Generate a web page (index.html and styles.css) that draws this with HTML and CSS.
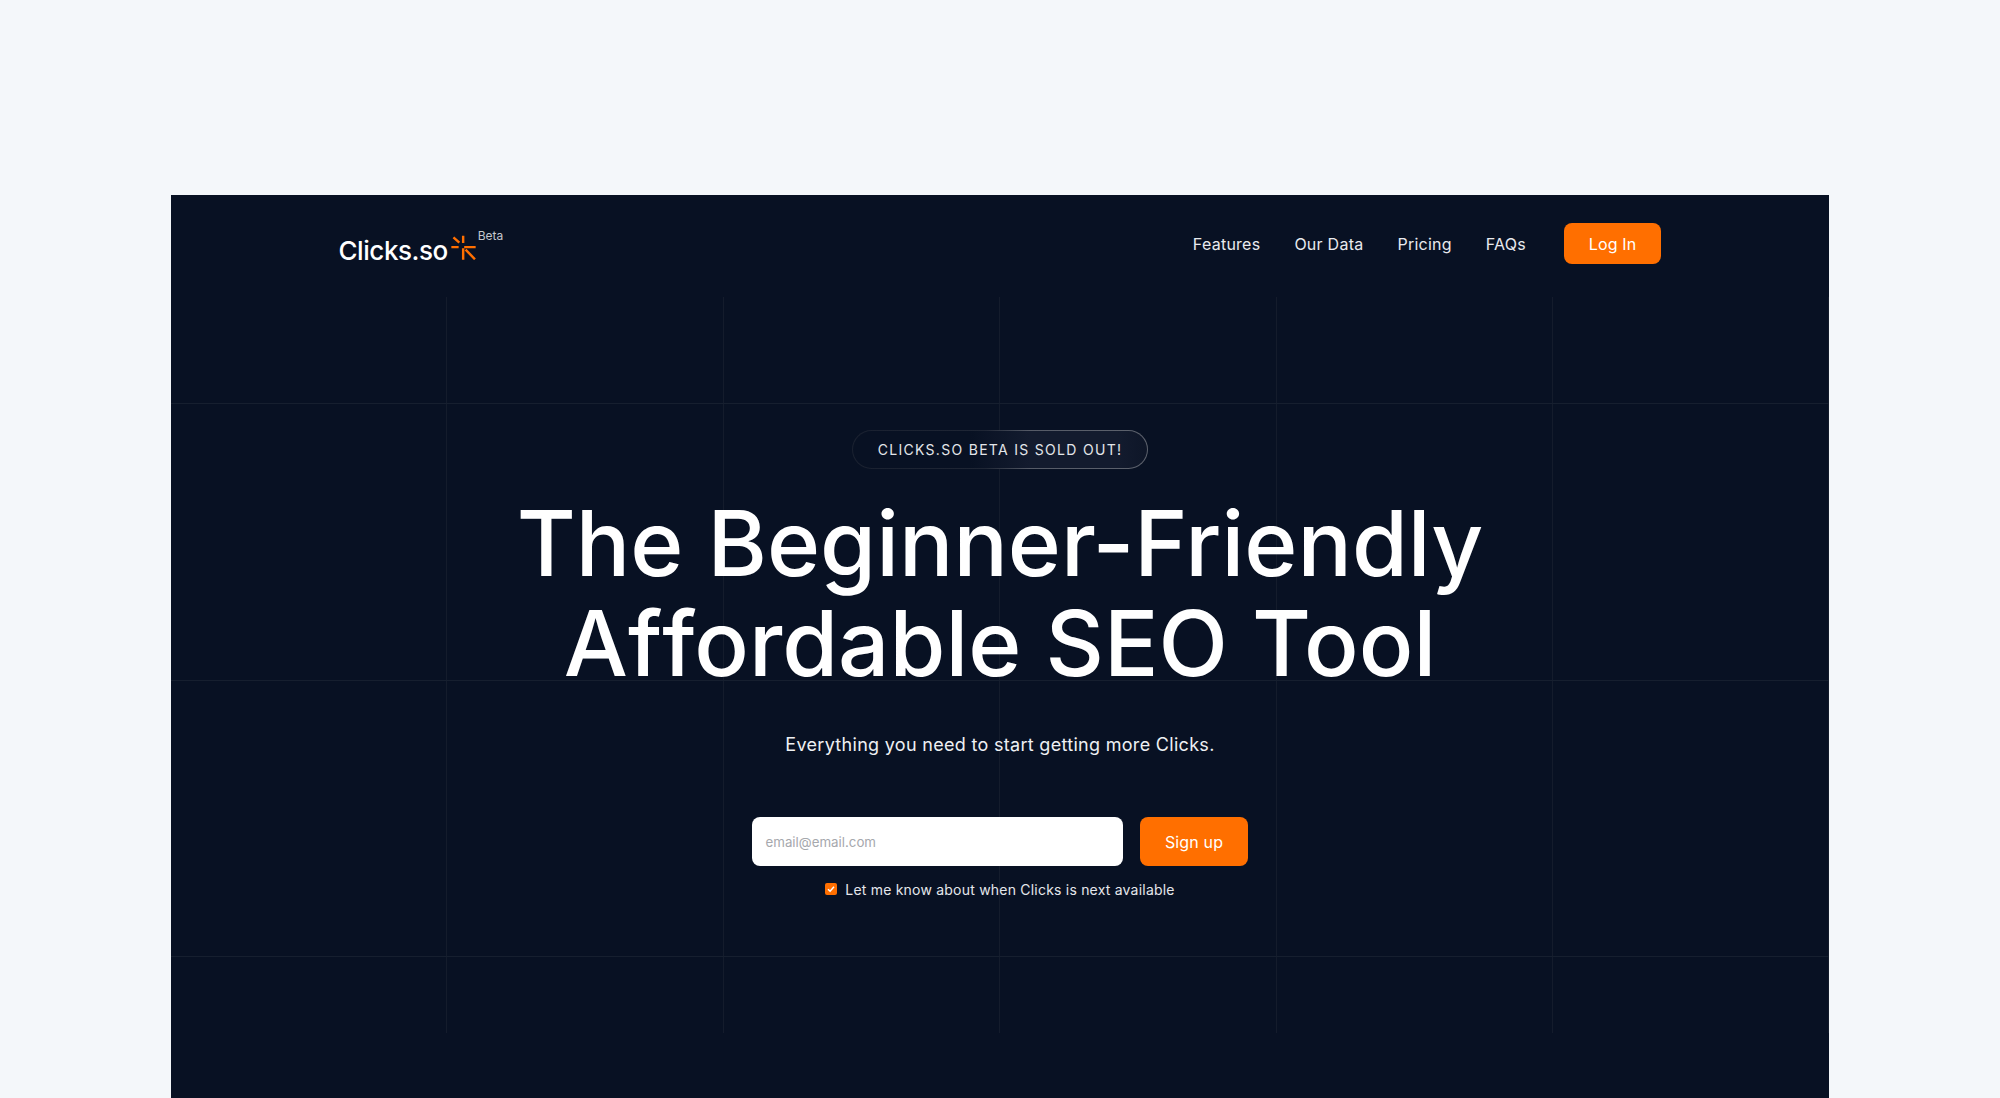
FILE: index.html
```html
<!DOCTYPE html>
<html lang="en">
<head>
<meta charset="utf-8">
<title>Clicks.so</title>
<link rel="stylesheet" href="styles.css">
</head>
<body>
<main class="panel">
  <div class="grid" aria-hidden="true"></div>
  <header class="nav">
    <a class="brand" href="#">
      <span class="brand-name">Clicks.so</span>
      <svg class="brand-icon" viewBox="0 0 72 72" fill="none" stroke="#ff6f00" stroke-width="7">
        <path d="M35 2V23M1 35H22M7 7L24 22M38 35H71M35 38V71M42 42L69 70"/>
      </svg>
      <span class="brand-tag">Beta</span>
    </a>
    <nav class="links">
      <a href="#">Features</a>
      <a href="#">Our Data</a>
      <a href="#">Pricing</a>
      <a href="#">FAQs</a>
    </nav>
    <a class="btn login" href="#">Log In</a>
  </header>
  <section class="hero">
    <div class="pill">CLICKS.SO BETA IS SOLD OUT!</div>
    <h1>The Beginner-Friendly<br>A<span class="f-gap">f</span>fordable SEO Tool</h1>
    <p class="sub">Everything you need to start getting more Clicks.</p>
    <form class="signup">
      <div class="email">email@email.com</div>
      <button class="btn signup-btn" type="button">Sign up</button>
    </form>
    <div class="consent">
      <svg class="check" viewBox="0 0 12 12"><rect width="12" height="12" rx="2" fill="#ff6f00"/><path d="M3 6.2L5.1 8.2L9 3.8" fill="none" stroke="#fff" stroke-width="1.5"/></svg>
      <span>Let me know about when Clicks is next available</span>
    </div>
  </section>
</main>
</body>
</html>
```
FILE: styles.css
```css
* { box-sizing: border-box; }
html, body { margin: 0; height: 100%; }
body {
  background: #f4f7fa;
  padding: 195px 171px 0;
  overflow: hidden;
  font-family: Inter, "Liberation Sans", sans-serif;
}
a { color: inherit; text-decoration: none; }
.panel {
  position: relative;
  height: 903px;
  background: #081123;
  color: #fff;
  overflow: hidden;
}
.grid {
  position: absolute;
  left: 0;
  right: 0;
  top: 102px;
  height: 736px;
  background-image:
    linear-gradient(#161f2f, #161f2f),
    linear-gradient(#161f2f, #161f2f),
    linear-gradient(#161f2f, #161f2f),
    repeating-linear-gradient(90deg, transparent 0, transparent 275.4px, #141c2c 275.4px, #141c2c 276.4px);
  background-size: 100% 1px, 100% 1px, 100% 1px, 100% 100%;
  background-position: 0 106px, 0 383px, 0 659px, 0 0;
  background-repeat: no-repeat;
}
.nav {
  position: relative;
  display: flex;
  align-items: center;
  height: 69px;
  padding: 28px 168px 0;
}
.brand { display: flex; align-items: flex-start; height: 41px; margin-right: auto; }
.brand-name { font-size: 26px; font-weight: 550; line-height: 32px; margin: 12px 0 0 -0.5px; letter-spacing: -0.45px; }
.brand-icon { width: 25px; height: 25px; margin: 12px 0 0 3px; }
.brand-tag { font-size: 12px; line-height: 14px; color: #c4c7cd; margin: 6px 0 0 2px; }
.links { display: flex; gap: 34px; font-size: 16px; letter-spacing: 0.25px; color: #e8eaee; }
.btn {
  background: #ff6f00;
  color: #fff;
  border: 0;
  border-radius: 8px;
  font-family: inherit;
  font-size: 16px;
  letter-spacing: 0.15px;
  text-align: center;
}
.login { width: 97px; height: 41px; line-height: 42px; margin-left: 38px; }
.hero {
  position: relative;
  display: flex;
  flex-direction: column;
  align-items: center;
  margin-top: 166px;
}
.pill {
  height: 39px;
  width: 296px;
  line-height: 37px;
  text-align: center;
  font-size: 14px;
  letter-spacing: 1.3px;
  color: #e3e6ea;
  border: 1px solid transparent;
  border-radius: 20px;
  background:
    linear-gradient(90deg, #081123 40%, #131b2e 60%, #131b2e 90%, #0e1628) padding-box,
    linear-gradient(90deg, #1a2130, #1f2635 45%, #565b67 60%, #5d626d) border-box;
}
h1 {
  margin: 24px 0 0;
  font-size: 90.5px;
  font-weight: 500;
  line-height: 100px;
  text-align: center;
  color: #fff;
  font-variant-ligatures: none;
}
.f-gap { letter-spacing: 0.01px; }
.sub { margin: 39px 0 0; font-size: 18px; line-height: 26px; color: #eef0f3; letter-spacing: 0.3px; }
.signup { display: flex; gap: 17px; margin-top: 59px; }
.email {
  width: 371px;
  height: 49px;
  line-height: 50px;
  padding-left: 13.5px;
  background: #fff;
  border-radius: 8px;
  font-size: 13.3px;
  color: #a6a8ad;
}
.signup-btn { width: 108px; height: 49px; }
.consent {
  display: flex;
  align-items: center;
  gap: 8px;
  margin-top: 14px;
  font-size: 14px;
  letter-spacing: 0.21px;
  line-height: 20px;
  color: #e5e7eb;
}
.check { width: 12px; height: 12px; margin-top: -2px; }
```
